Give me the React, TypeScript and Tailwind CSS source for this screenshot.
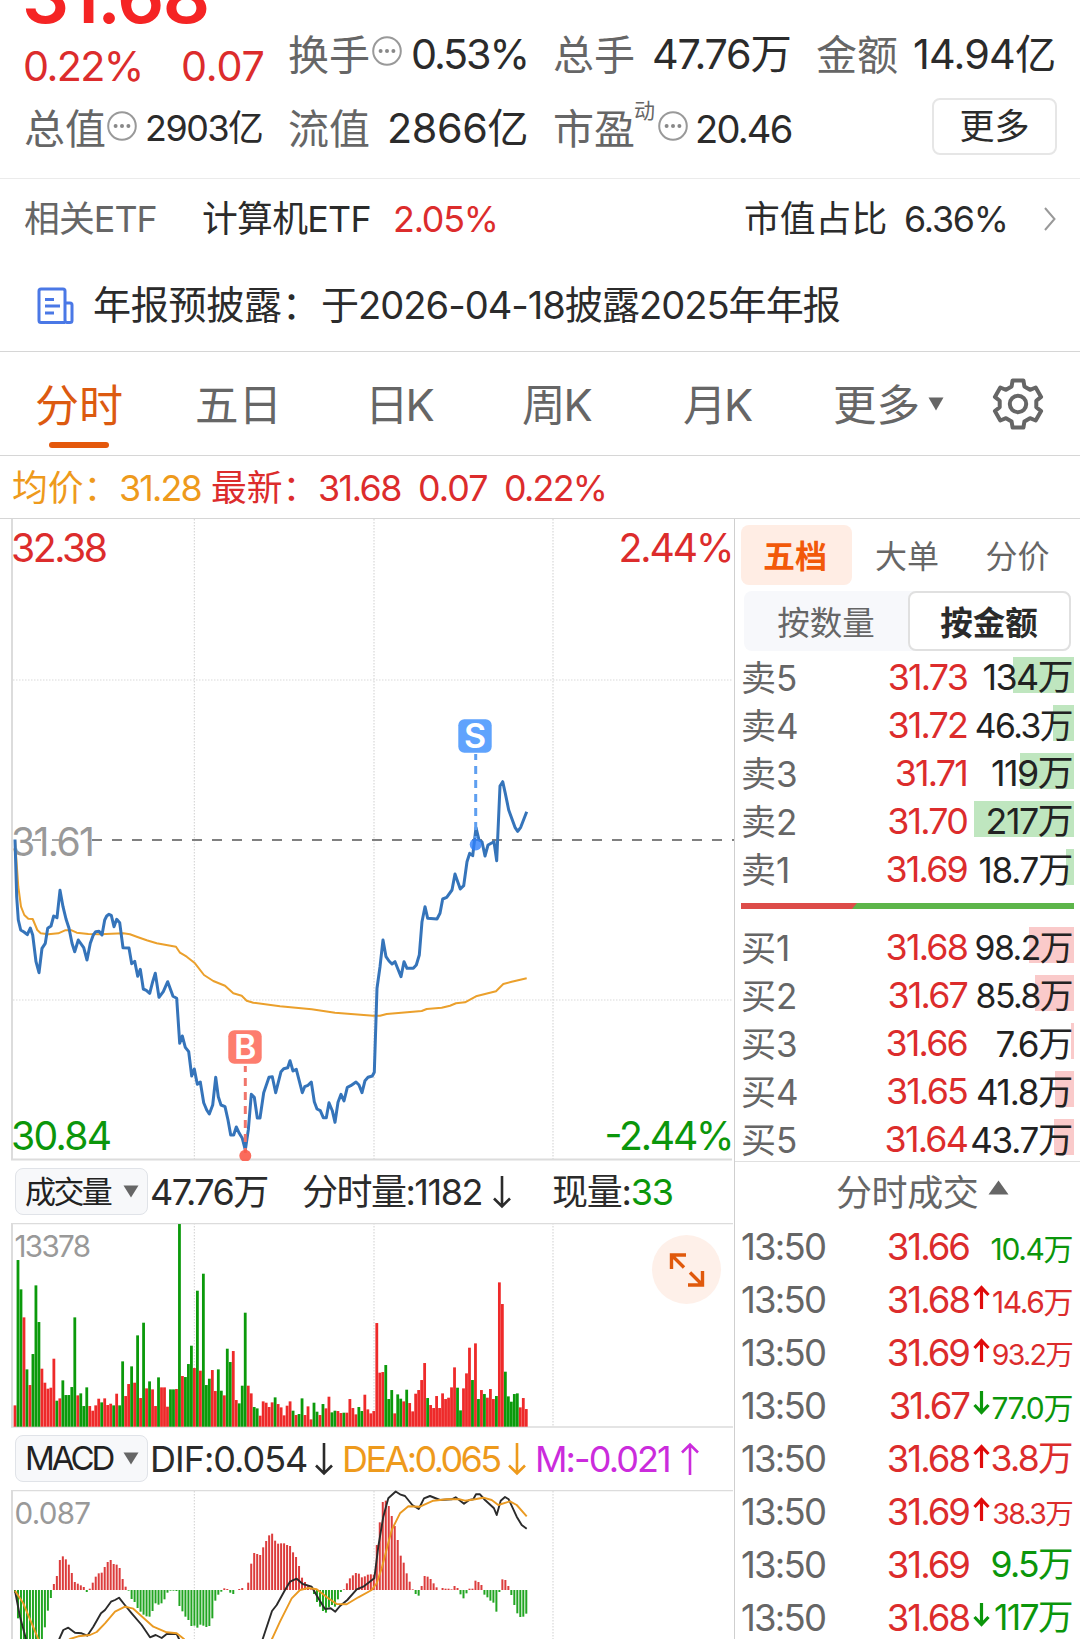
import React from "react";
import { clsx } from "clsx";

const RED = "#ee2a2a";
const GREEN = "#0b9a0b";
const PITCH = 2.99;

const pricePoints =
  "15,839.5 16.7,897 18.3,920 20.7,930 24,932 27.3,934.7 30.3,928 32.7,935 36,961.7 39,972.7 42,948.3 45.3,943.3 47.7,928.3 51,926 53.7,916 57,917.7 60,890.3 63,906.7 66,919 69,928.3 72,943.3 74.7,951.7 78.3,940 83.7,947.7 87,960 90.3,943.3 93.3,935 95.7,931.7 99,931.3 102,935 104.7,920 106.7,916 109,914.3 111.3,915.3 114,926.7 116.7,919.3 119.7,922.7 123,947.7 129,948 131.7,963.7 134.7,961.3 137.7,976.3 140.3,969.3 143.3,989 146.3,990.3 149.7,993.3 152.7,981.7 155.3,973.3 159,997.3 163.3,991.7 167.7,981.7 173,996.3 176.7,998.3 179.7,1043.3 182.3,1036 185.3,1047.3 188.7,1051.7 191.7,1076 194.3,1069 197.3,1084.3 200.3,1082 203.7,1102.7 206.7,1110 209.3,1114 212.7,1105 215.7,1077.3 218.3,1096.7 221,1105 225,1106.7 228,1120 230.7,1135 233.7,1135 236.3,1127 239.3,1133.3 242.3,1138.3 245.3,1150 248.3,1130 251.3,1094.3 254.3,1097.3 257.3,1118 260,1118 263.7,1092.7 269,1077.3 272.3,1076.7 275.7,1092.7 281,1071.7 283.7,1068.7 287.7,1067.7 290,1060.7 293,1071 296.3,1069.3 302.3,1092.7 304.7,1086.7 308,1085.3 311.3,1082 314.3,1101.7 317,1109 320.3,1110.7 323.3,1117.7 326.3,1117.7 329,1102.7 332.3,1110.7 335,1122.3 338,1102.3 341,1094.3 344,1101 347.3,1087.3 350.7,1085.7 356,1082 359,1085 362,1092.7 365,1080.7 368,1077.3 372.3,1076 374.3,1072.3 377,988.3 380,966.7 383,940 386,956.7 389,961 392,964 395,961.7 401,976.7 404,961.7 407,968.3 413.3,968.3 416.3,965 419.3,955 422,921.7 425,906.7 427.7,918.3 437,919 440,913.3 442.7,899 446.7,897.3 452,890 455,874 457.7,881.7 460.3,889 463.7,885.7 467,861.7 469.7,853.3 472.7,855.7 476,827.7 479,840 482,841.7 485,856 488,845 494,841.7 496.7,860.7 500,786 502.7,781.7 505.3,793.3 508.7,810 515,827.3 517.7,831.3 520.7,827.3 526.7,811.7";

const averagePoints =
  "15,840 15.7,850 18.3,886.7 21,906.7 24.3,915 28.3,918.7 32.7,919 37.3,930 40.7,933.3 48.3,934.3 58.3,933.3 65,930.3 71.7,930.3 76.7,932.7 88.3,934 100,934.3 123.3,933.3 130,934.3 136.7,936.7 146.7,940.3 156.7,943.3 176,946.7 180,952.7 186.7,956.7 195,963.3 204,975 213.3,981 225,985.7 233.3,993.3 241.7,995.7 246.7,1000.7 253.3,1002.7 280,1006.3 311.7,1009.3 335,1012.7 373.3,1015.7 380,1015.7 386.7,1014 421.7,1011 426.7,1009 441.7,1007.7 450,1005.7 456,1003.3 465,1002.3 476,996.3 485,994 496,991.3 503.3,984 511.7,981.7 526.7,978.3";

// positive = up minute, negative = down minute
const volumes = [
  64, -500, -412, 328, -172, 125, -218, -424, -314, 174, 132, 114, 117, 204, -78, 85, -139, -95, -95, -119,
  -328, 94, -100, -62, -118, 62, 48, 64, 84, -73, 85, 65, 69, -64, 99, -64, -196, 92, 128, -181,
  132, -274, 86, -312, 115, -136, 112, 62, -148, 118, 118, 60, -112, -112, 113, -608, 152, -149, -188, -243,
  176, -408, 168, -459, -125, -144, 170, 107, -172, -108, 94, -234, -194, 227, 80, -70, -123, -342, 123, 100,
  -59, -55, 33, 76, 72, 59, 73, -88, 68, 58, 34, 63, 76, -48, 35, -38, -85, 35, 61, 22,
  -72, -45, 35, -68, 55, 90, -43, -48, 47, 41, -42, 42, 83, 56, 37, -59, -47, 96, 52, 40,
  47, 311, 162, 164, -185, -83, -110, 40, -97, -84, 76, -111, 71, 46, 99, 110, 140, 191, -86, 65,
  56, 92, 56, 100, 83, 87, 118, 178, -117, -49, 115, 160, 237, -140, 250, -83, 110, -98, 87, 113,
  83, -92, 433, 368, -165, -91, -75, -98, -100, 58, 86, 53,
];

const macdBars = [
  -8, -85, -147, -160, -180, -190, -190, -180, -165, -150, -112, -62, -24, 18, 42, 90, 101, 92, 76, 51,
  24, 19, 14, 9, -6, 4, 22, 40, 50, 52, 69, 84, 90, 78, 76, 66, 33, 10, -2, -27,
  -36, -54, -65, -74, -79, -80, -63, -40, -44, -40, -28, -8, -2, -2, -3, -48, -64, -80, -90, -108,
  -107, -113, -104, -107, -111, -108, -85, -32, -14, -5, 5, 3, -8, -12, 0, 3, 6, 0, 22, 79,
  111, 108, 105, 128, 147, 164, 169, 148, 139, 140, 140, 135, 132, 113, 99, 72, 37, 24, 12, 2,
  -12, -36, -50, -63, -68, -52, -45, -50, -28, -6, 2, 20, 35, 44, 51, 49, 38, 41, 46, 47,
  46, 135, 203, 264, 268, 252, 222, 192, 150, 103, 82, 50, 25, 2, -12, -17, 12, 42, 40, 33,
  20, 8, 0, 6, 4, 4, 2, 12, 6, -13, -25, -10, 4, 4, 28, 24, 15, -14, -22, -32,
  -38, -65, -6, 32, 30, 12, -15, -45, -70, -81, -80, -71,
];

const difPoints =
  "15,1590.7 20,1616.7 26,1639 36,1668 50,1660 59.3,1639 63.3,1630 68.3,1627.7 75,1632.7 81.7,1633.3 87.3,1635.7 93.3,1626.7 101,1613.3 105,1610 111,1601.7 115,1600 119,1597.7 124,1604 131.7,1613.3 141.7,1625 150,1637.3 155.7,1635 161.7,1638 166.7,1634 176.7,1634 180,1641 200,1690 250,1680 262.7,1639 272,1611 276.7,1605 285,1590 290,1581.7 296.7,1578.7 302.7,1584 311.7,1586.7 318.3,1598.3 325,1609 330.7,1608.3 335.3,1611.7 340,1606 347.3,1600 356.7,1589.3 363.3,1586.7 374.3,1578.3 378.3,1546.7 383.3,1516.7 388.3,1498.3 395.7,1491.5 400.7,1494.7 405,1496 412.3,1505 418.7,1509 424,1498.3 430,1496 440,1500 451.7,1499.3 455.7,1497.3 464,1503.7 469.3,1500 473.3,1499.3 476,1494.3 480,1494.3 485,1500 494,1508.3 496.7,1515 500.7,1500.7 505,1497 508.7,1499.3 516.7,1516.7 521.7,1525 526.7,1528.7";

const deaPoints =
  "15,1590.7 23.3,1603.3 31.7,1623.3 38.3,1639 50,1655 70,1639 78.3,1636.3 90,1635 96.7,1632 105,1623.3 115,1611.7 125,1606.7 133.3,1608.7 143.3,1617.7 153.3,1626.7 166.7,1632.3 176.7,1633.3 184,1639 210,1680 255,1670 272.3,1638.3 280,1621.7 291.7,1598.3 300,1590 308.3,1588 316.7,1589.3 328.3,1598.3 336.7,1604 346.7,1604.3 358.3,1597.3 371.7,1590 376.7,1583.3 381.7,1568.3 391.7,1530 400,1513.3 408.3,1506.3 420,1506.7 433.3,1500.7 446.7,1499.3 460,1499.3 465,1500.7 475,1499.3 483.3,1497.7 491.7,1500 498.3,1505 510,1501.3 516.7,1505 526.7,1516.3";

type Level = { label: string; price: string; amount: string; bar: number; wide?: boolean };

const asks: Level[] = [
  { label: "卖5", price: "31.73", amount: "134万", bar: 61 },
  { label: "卖4", price: "31.72", amount: "46.3万", bar: 21 },
  { label: "卖3", price: "31.71", amount: "119万", bar: 54 },
  { label: "卖2", price: "31.70", amount: "217万", bar: 100 },
  { label: "卖1", price: "31.69", amount: "18.7万", bar: 8, wide: true },
];

const bids: Level[] = [
  { label: "买1", price: "31.68", amount: "98.2万", bar: 45 },
  { label: "买2", price: "31.67", amount: "85.8万", bar: 39 },
  { label: "买3", price: "31.66", amount: "7.6万", bar: 3, wide: true },
  { label: "买4", price: "31.65", amount: "41.8万", bar: 19, wide: true },
  { label: "买5", price: "31.64", amount: "43.7万", bar: 20, wide: true },
];

type Trade = {
  price: string;
  move?: "up" | "down";
  amount: string;
  side: "buy" | "sell";
  size: "sm" | "md" | "lg";
};

const trades: Trade[] = [
  { price: "31.66", amount: "10.4万", side: "sell", size: "md" },
  { price: "31.68", move: "up", amount: "14.6万", side: "buy", size: "md" },
  { price: "31.69", move: "up", amount: "93.2万", side: "buy", size: "sm" },
  { price: "31.67", move: "down", amount: "77.0万", side: "sell", size: "md" },
  { price: "31.68", move: "up", amount: "3.8万", side: "buy", size: "lg" },
  { price: "31.69", move: "up", amount: "38.3万", side: "buy", size: "sm" },
  { price: "31.69", amount: "9.5万", side: "sell", size: "lg" },
  { price: "31.68", move: "down", amount: "117万", side: "sell", size: "lg" },
];

const amountSize = {
  sm: "pt-[4px] text-[28.5px] tracking-[-1.7px]",
  md: "pt-[3px] text-[30px] tracking-[-1.4px]",
  lg: "text-[35.5px] tracking-[-1.6px]",
};

const DotsIcon: React.FC<{ className?: string }> = ({ className }) => (
  <svg viewBox="0 0 30 30" className={clsx("size-[30px] shrink-0", className)}>
    <circle cx="15" cy="15" r="13.8" fill="none" stroke="#999" strokeWidth="2" />
    <circle cx="8.6" cy="15" r="2" fill="#888" />
    <circle cx="15" cy="15" r="2" fill="#888" />
    <circle cx="21.4" cy="15" r="2" fill="#888" />
  </svg>
);

const gearPoints = [0, 60, 120, 180, 240, 300]
  .flatMap((a) => [
    [a - 20, 18.6],
    [a - 13, 24.2],
    [a + 13, 24.2],
    [a + 20, 18.6],
  ])
  .map(([deg, r]) => {
    const t = ((deg - 90) * Math.PI) / 180;
    return `${(27 + r * Math.cos(t)).toFixed(1)},${(27 + r * Math.sin(t)).toFixed(1)}`;
  })
  .join(" ");

const GearIcon = () => (
  <svg viewBox="0 0 54 54" className="-mt-[4px] size-[54px] shrink-0" fill="none" stroke="#666" strokeWidth="4">
    <polygon points={gearPoints} strokeLinejoin="round" />
    <circle cx="27" cy="27" r="8.2" />
  </svg>
);

const ThinArrow: React.FC<{ up?: boolean; className?: string }> = ({ up, className }) => (
  <svg viewBox="0 0 18 34" className={clsx("h-[34px] w-[18px] shrink-0", up && "rotate-180", className)}>
    <path d="M9 1V31M1 23.5L9 31.5L17 23.5" fill="none" stroke="currentColor" strokeWidth="2.6" />
  </svg>
);

const Chip: React.FC<{ children: React.ReactNode; className?: string }> = ({ children, className }) => (
  <div className="-mt-px ml-[15px] flex h-[47px] w-[133px] shrink-0 items-center rounded-lg border border-[#e0e3e8] bg-[#f7f8fa] pl-[9px]">
    <span className={clsx("w-[98px] text-[#222]", className)}>{children}</span>
    <svg viewBox="0 0 16 13" className="h-[13px] w-4 shrink-0">
      <path d="M0.5 0.5H15.5L8 12.5Z" fill="#666" />
    </svg>
  </div>
);

const GridColumns: React.FC<{ top: number; bottom: number }> = ({ top, bottom }) => (
  <g stroke="#cfcfcf" strokeDasharray="1.5 1.5">
    {[194.3, 374, 553].map((x) => (
      <line key={x} x1={x} x2={x} y1={top} y2={bottom} />
    ))}
  </g>
);

const PriceChart = () => (
  <svg viewBox="0 519 734 642" className="h-[642px] w-[734px]">
    <GridColumns top={519} bottom={1159} />
    <g stroke="#d9d9d9" strokeDasharray="1.5 1.5">
      <line x1="13" x2="732" y1="680" y2="680" />
      <line x1="13" x2="732" y1="1000" y2="1000" />
    </g>
    <path d="M12 519V1159.5H732" fill="none" stroke="#dcdcdc" strokeWidth="2" />
    <line x1="92" x2="734" y1="840" y2="840" stroke="#808080" strokeWidth="1.8" strokeDasharray="10 10" />
    <g fontSize="39.2">
      <text x="11" y="562" textLength="97" fill="#dc2c2c">32.38</text>
      <text x="618.5" y="562" textLength="116" fill="#dc2c2c">2.44%</text>
      <text x="11" y="855.7" textLength="84" fill="#999">31.61</text>
      <text x="11" y="1149.8" textLength="101" fill="#0b960b">30.84</text>
      <text x="604.5" y="1149.8" textLength="130" fill="#0b960b">-2.44%</text>
    </g>
    <line x1="32" x2="41" y1="840" y2="840" stroke="#999" strokeWidth="1.8" />
    <line x1="52" x2="61" y1="840" y2="840" stroke="#999" strokeWidth="1.8" />
    <polyline points={averagePoints} fill="none" stroke="#eba02c" strokeWidth="2" strokeLinejoin="round" />
    <polyline points={pricePoints} fill="none" stroke="#3574ba" strokeWidth="3" strokeLinejoin="round" />

    <line x1="475.7" x2="475.7" y1="754" y2="838" stroke="#5e9ff0" strokeWidth="3" strokeDasharray="8 6" strokeDashoffset="2" />
    <circle cx="475.7" cy="844.5" r="6" fill="#2f80fa" fillOpacity="0.8" />
    <rect x="458.3" y="719.3" width="33.4" height="33.4" rx="6" fill="#5fa3fd" />
    <text x="475" y="748" textAnchor="middle" fontSize="34" fontWeight="600" fill="#fff">S</text>

    <line x1="245.3" x2="245.3" y1="1066" y2="1153" stroke="#f0756b" strokeWidth="3" strokeDasharray="8 6" strokeDashoffset="2" />
    <circle cx="245.3" cy="1155.7" r="6" fill="#fb5b4a" fillOpacity="0.9" />
    <rect x="228.3" y="1030.3" width="33.4" height="33.4" rx="6" fill="#fd7d6e" />
    <text x="245.3" y="1059" textAnchor="middle" fontSize="34" fontWeight="600" fill="#fff">B</text>
  </svg>
);

const VolumeChart = () => (
  <svg viewBox="0 1223 734 205" className="h-[205px] w-[734px]">
    <GridColumns top={1223} bottom={1426} />
    <path d="M12 1223V1427" stroke="#dcdcdc" strokeWidth="2" />
    <path d="M11 1223.5H733M11 1427H733" stroke="#dcdcdc" strokeWidth="1.4" />
    {volumes.map((v, i) => {
      const h = Math.abs(v) / 3;
      return <rect key={i} x={13.6 + i * PITCH} y={1426.7 - h} width="2.8" height={h} fill={v > 0 ? RED : GREEN} />;
    })}
    <text x="14.5" y="1256.7" fontSize="29.6" textLength="76.5" fill="#999">13378</text>
  </svg>
);

const MacdChart = () => (
  <svg viewBox="0 1490 734 149" className="h-[149px] w-[734px]">
    <GridColumns top={1491} bottom={1639} />
    <path d="M12 1490V1639" stroke="#dcdcdc" strokeWidth="2" />
    <path d="M11 1490.5H733" stroke="#dcdcdc" strokeWidth="1.4" />
    {macdBars.map((v, i) => {
      const h = Math.abs(v) / 3;
      return (
        <rect key={i} x={14 + i * PITCH} y={v > 0 ? 1590 - h : 1590} width="2" height={h} fill={v > 0 ? "#dc3c3c" : "#22a522"} />
      );
    })}
    <polyline points={difPoints} fill="none" stroke="#2b2b2b" strokeWidth="1.9" strokeLinejoin="round" />
    <polyline points={deaPoints} fill="none" stroke="#ea9a22" strokeWidth="1.9" strokeLinejoin="round" />
    <text x="14.5" y="1523.6" fontSize="29.6" textLength="76.5" fill="#999">0.087</text>
  </svg>
);

const LevelRow: React.FC<{ level: Level; side: "ask" | "bid" }> = ({ level, side }) => (
  <div className="relative flex h-12 items-center pl-[6px] pr-[8px] text-[35.8px]">
    <div
      className={clsx("absolute right-[6px] top-[3px] h-9", side === "ask" ? "bg-[#bfe6bf]" : "bg-[#facaca]")}
      style={{ width: level.bar }}
    />
    <span className="relative w-[80px] text-[35px] text-[#666]">{level.label}</span>
    <span className="relative w-[146px] text-right tracking-[-1.8px] text-[#dc2c2c]">{level.price}</span>
    <span
      className={clsx(
        "relative flex-1 text-right text-[#222]",
        level.wide && "text-[35px] tracking-[-1.2px]",
        !level.wide && "tracking-[-1.5px]",
        !level.wide && level.amount.length > 4 && "text-[33.7px]"
      )}
    >
      {level.amount}
    </span>
  </div>
);

const TradeRow: React.FC<{ trade: Trade }> = ({ trade }) => (
  <div className="flex h-[53px] items-center pl-[6px] pr-[8px] pt-px text-[36.5px]">
    <span className="w-[90px] tracking-[-1.8px] text-[#666]">13:50</span>
    <span className="w-[138px] text-right tracking-[-2px] text-[#dc2c2c]">{trade.price}</span>
    <span className="flex w-[21px] justify-end">
      {trade.move && (
        <svg viewBox="0 0 17 24" className={clsx("mb-[6px] h-6 w-[17px]", trade.move === "down" && "rotate-180")}>
          <path
            d="M8.5 24V3M1.5 10L8.5 2.5L15.5 10"
            fill="none"
            strokeWidth="3.2"
            stroke={trade.move === "up" ? "#e00b0b" : "#0b960b"}
          />
        </svg>
      )}
    </span>
    <span
      className={clsx(
        "flex-1 text-right",
        trade.side === "buy" ? "text-[#dc2c2c]" : "text-[#0b960b]",
        amountSize[trade.size]
      )}
    >
      {trade.amount}
    </span>
  </div>
);

export default function App() {
  return (
    <div
      lang="zh-CN"
      className="h-[1639px] w-[1080px] overflow-hidden whitespace-nowrap bg-white font-['Inter','Noto_Sans_CJK_SC',sans-serif] font-normal leading-none text-[#2b2b2b]"
    >
      {/* quote summary */}
      <header className="h-[179px] border-b border-[#ebebeb]">
        <div className="flex h-[99px]">
          <div className="w-[288px] shrink-0 pl-[22px]">
            <div className="-mt-[31px] h-[54px] text-[74px] font-semibold leading-[54px] tracking-[-1.6px] text-[#f52424]">31.68</div>
            <div className="mt-[14px] flex h-[60px] items-center pl-px text-[41.3px] text-[#dc2c2c]">
              <span className="w-[158px] tracking-[-1.6px]">0.22%</span>
              <span className="tracking-[-0.2px]">0.07</span>
            </div>
          </div>
          <div className="mt-[25px] flex h-[60px] items-center text-[41.3px]">
            <span className="w-[84px] text-[41px] text-[#666]">换手</span>
            <DotsIcon className="-mt-[9px]" />
            <span className="ml-[9px] w-[142px] tracking-[-2.1px]">0.53%</span>
            <span className="w-[99px] text-[41px] text-[#666]">总手</span>
            <span className="w-[164px] tracking-[-1.2px]">47.76万</span>
            <span className="w-[97px] text-[41px] text-[#666]">金额</span>
            <span className="tracking-[-0.8px]">14.94亿</span>
          </div>
        </div>
        <div className="flex h-[60px] items-center pl-[24px] text-[41.3px]">
          <span className="w-[83px] text-[41px] text-[#666]">总值</span>
          <DotsIcon className="-mt-[7px]" />
          <span className="ml-[8px] w-[143px] text-[35.8px] tracking-[-1.4px]">2903亿</span>
          <span className="w-[99px] text-[41px] text-[#666]">流值</span>
          <span className="w-[166px] tracking-[-0.4px]">2866亿</span>
          <span className="w-[81px] text-[41px] text-[#666]">市盈</span>
          <span className="-mt-[38px] w-[24px] text-[21px] text-[#666]">动</span>
          <DotsIcon className="-mt-[7px]" />
          <span className="ml-[7px] w-[237px] text-[38.1px] tracking-[-1.8px]">20.46</span>
          <button className="-mt-[5px] h-[57px] w-[125px] rounded-lg border-2 border-[#e6e6e6] text-[35px]">更多</button>
        </div>
      </header>

      {/* related ETF */}
      <div className="flex h-[80px] items-center pl-[24px] pt-[2px] text-[35.8px]">
        <span className="w-[178px] tracking-[-0.9px] text-[#666]">相关ETF</span>
        <span className="w-[191px] tracking-[-0.7px]">计算机ETF</span>
        <span className="w-[351px] tracking-[-1.2px] text-[#dc2c2c]">2.05%</span>
        <span className="w-[160px]">市值占比</span>
        <span className="w-[140px] tracking-[-1.2px]">6.36%</span>
        <svg viewBox="0 0 12 24" className="-mt-[2px] h-6 w-3">
          <path d="M1 1L10.5 12L1 23" fill="none" stroke="#999" strokeWidth="2" />
        </svg>
      </div>

      <div className="flex h-[93px] items-center border-b border-[#d6d6d6] pl-[37px] pt-px">
        <svg viewBox="0 0 37 38" className="h-[38px] w-[37px] fill-none stroke-[#4a78e6] stroke-[3]">
          <path d="M28 35.5H4Q2 35.5 2 33.5V4Q2 2 4 2H26Q28 2 28 4V33Q28 35.5 30 35.5H33Q35 35.5 35 33.5V18Q35 16 33 16H28" />
          <path d="M8 12.5H17M8 19H23M8 26H17" />
        </svg>
        <span className="ml-[19px] w-[228px] text-[38.1px] tracking-[-0.3px]">年报预披露：</span>
        <span className="text-[38.1px] tracking-[-1px]">于2026-04-18披露2025年年报</span>
      </div>

      {/* period tabs */}
      <nav className="flex h-[104px] items-center border-b border-[#d6d6d6] pl-[35px] pt-[4px] text-[43.5px] text-[#666]">
        <div className="relative w-[160px] text-[44px] text-[#dc5a10]">
          分时
          <span className="absolute left-[14px] top-[58px] h-[6px] w-[60px] rounded-full bg-[#e4580c]" />
        </div>
        <span className="w-[170px]">五日</span>
        <span className="w-[157px] tracking-[-3px]">日K</span>
        <span className="w-[161px] tracking-[-2px]">周K</span>
        <span className="w-[150px] tracking-[-2.5px]">月K</span>
        <span className="w-[95px]">更多</span>
        <svg viewBox="0 0 16 14" className="-mt-[4px] h-[14px] w-4">
          <path d="M0.5 0.5H15.5L8 13.5Z" fill="#666" />
        </svg>
        <span className="ml-[47px]">
          <GearIcon />
        </span>
      </nav>

      <div className="flex h-[63px] items-center border-b border-[#d6d6d6] pl-[12px] pt-[3px] text-[35.8px] text-[#dc2c2c]">
        <span className="w-[107px] text-[#ee9a1c]">均价：</span>
        <span className="w-[92px] tracking-[-1.8px] text-[#ee9a1c]">31.28</span>
        <span className="w-[107px]">最新：</span>
        <span className="w-[100px] tracking-[-1.5px]">31.68</span>
        <span className="w-[86px] tracking-[-0.9px]">0.07</span>
        <span className="tracking-[-1.7px]">0.22%</span>
      </div>

      <div className="flex h-[1120px]">
        <main className="flex w-[735px] shrink-0 flex-col border-r border-[#cfcfcf]">
          <PriceChart />

          <div className="flex h-[62px] shrink-0 items-center text-[36px]">
            <Chip className="text-[31px] tracking-[-2.6px]">成交量</Chip>
            <span className="ml-[2px] w-[152px] tracking-[-1.6px]">47.76万</span>
            <span className="w-[191px] tracking-[-1.5px]">分时量:1182</span>
            <ThinArrow />
            <span className="ml-[41px] tracking-[-1.2px]">
              现量:<span className="text-[#0b960b]">33</span>
            </span>
          </div>

          <div className="relative h-[205px] shrink-0">
            <VolumeChart />
            <button className="absolute left-[652px] top-[12px] flex size-[69px] items-center justify-center rounded-full bg-[#fef0e9]">
              <svg viewBox="0 0 36 36" className="size-9" fill="none" stroke="#e0590c" strokeWidth="3.4">
                <path d="M2.5 17V3H17M3 3.5L15 15.5M33.5 19V33H19M33 32.5L21 20.5" />
              </svg>
            </button>
          </div>

          <div className="flex h-[62px] shrink-0 items-center text-[36px]">
            <Chip className="text-[33px] tracking-[-3px]">MACD</Chip>
            <span className="ml-[2px] w-[165px] tracking-[-1px]">DIF:0.054</span>
            <ThinArrow />
            <span className="ml-[9px] w-[166px] tracking-[-2.6px] text-[#ee9a1c]">DEA:0.065</span>
            <ThinArrow className="text-[#ee9a1c]" />
            <span className="ml-[9px] w-[146px] tracking-[-1.9px] text-[#cb2bdc]">M:-0.021</span>
            <ThinArrow up className="text-[#cb2bdc]" />
          </div>

          <MacdChart />
        </main>

        {/* order book */}
        <aside className="min-w-0 flex-1">
          <div className="ml-[6px] mt-[6px] flex h-[60px] text-center text-[32px] leading-[64px] text-[#666]">
            <span className="w-[111px] rounded-lg bg-[#ffede4] pr-[3px] font-bold text-[#f2590a]">五档</span>
            <span className="w-[110px]">大单</span>
            <span className="w-[111px]">分价</span>
          </div>
          <div className="ml-[9px] mt-[6px] flex h-[60px] w-[327px] rounded-lg bg-[#f7f8fb] text-center text-[32.5px] text-[#666]">
            <span className="flex-1 leading-[65px]">按数量</span>
            <span className="w-[163px] rounded-lg border-2 border-[#e0e0e0] bg-white pr-px font-bold leading-[61px] text-[#2b2b2b]">按金额</span>
          </div>

          <div className="mt-[3px]">
            {asks.map((level) => (
              <LevelRow key={level.label} level={level} side="ask" />
            ))}
          </div>
          <svg viewBox="0 0 333 6" className="ml-[6px] mt-[9px] h-[6px] w-[333px]">
            <path d="M0 0H333V6H0Z" fill="#5db54a" />
            <path d="M0 0H116L111 6H0Z" fill="#dd4c49" />
          </svg>
          <div className="mt-[15px] h-[237px]">
            {bids.map((level) => (
              <LevelRow key={level.label} level={level} side="bid" />
            ))}
          </div>

          <div className="flex h-[59px] items-center border-t border-[#e0e0e0] pl-[101px] pt-[3px] text-[36px] text-[#666]">
            <span className="w-[152px] tracking-[-0.4px]">分时成交</span>
            <svg viewBox="0 0 21 15" className="mb-[10px] h-[15px] w-[21px]">
              <path d="M10.5 0.5L20.5 14.5H0.5Z" fill="#666" />
            </svg>
          </div>
          {trades.map((trade, i) => (
            <TradeRow key={i} trade={trade} />
          ))}
        </aside>
      </div>
    </div>
  );
}
